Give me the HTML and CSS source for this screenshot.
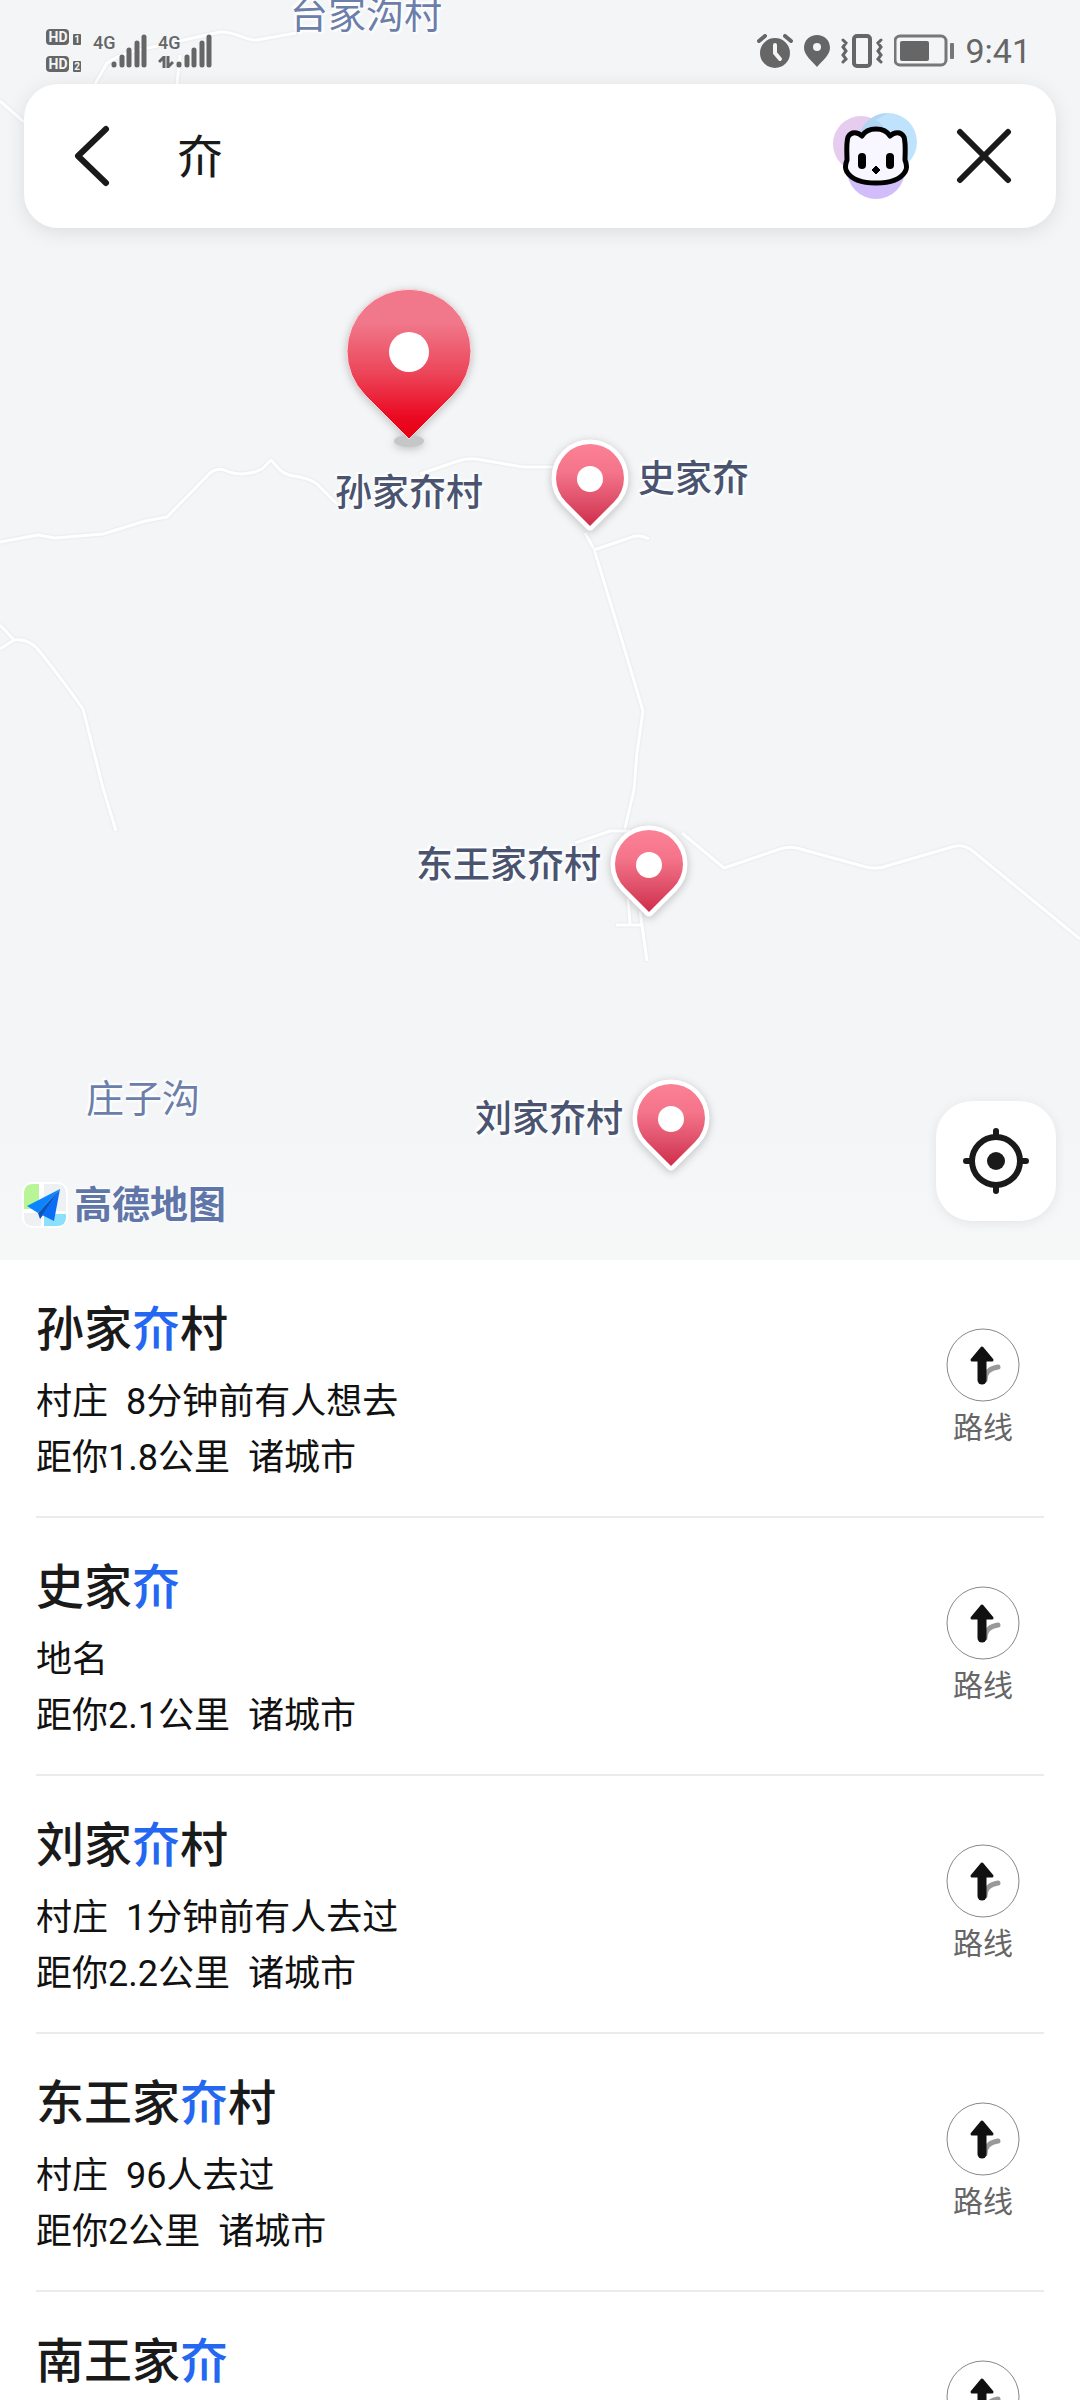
FILE: index.html
```html
<!DOCTYPE html>
<html lang="zh-CN">
<head>
    <meta charset="UTF-8">
    <meta name="viewport" content="width=device-width, initial-scale=1.0">
    <title>夼 - 高德地图</title>
    <link rel="stylesheet" href="styles.css">
</head>
<body>
    <!-- 共用图形 -->
    <svg class="defs" width="0" height="0" aria-hidden="true">
        <defs>
            <linearGradient id="pin-big-fill" x1="0" y1="0" x2="0" y2="1">
                <stop offset="0" stop-color="#f0788a"/>
                <stop offset="0.22" stop-color="#f0788a"/>
                <stop offset="0.55" stop-color="#ec475b"/>
                <stop offset="0.85" stop-color="#ea0a22"/>
                <stop offset="1" stop-color="#e60012"/>
            </linearGradient>
            <linearGradient id="pin-fill" x1="0" y1="0" x2="0" y2="1">
                <stop offset="0" stop-color="#fc8196"/>
                <stop offset="0.35" stop-color="#f4748a"/>
                <stop offset="0.75" stop-color="#dc4a64"/>
                <stop offset="1" stop-color="#cf2d4b"/>
            </linearGradient>
            <symbol id="pin" viewBox="0 0 80 100">
                <path d="M40 88 L16 64 A34 34 0 1 1 64 64 Z" fill="#fff" stroke="#fff" stroke-width="9" stroke-linejoin="round"/>
                <path d="M40 88 L16 64 A34 34 0 1 1 64 64 Z" fill="url(#pin-fill)"/>
                <circle cx="40" cy="41" r="13" fill="#fff"/>
            </symbol>
            <symbol id="signal" viewBox="0 0 36 34">
                <path d="M3 30v1M11 23v8M18 16v15M26 9v22M33 3v28" fill="none" stroke="#666" stroke-width="5" stroke-linecap="round"/>
            </symbol>
            <symbol id="route" viewBox="0 0 74 74">
                <circle cx="37" cy="37" r="36" fill="#fff" stroke="#888"/>
                <path d="M39 52c0-7 5-12 13-13" fill="none" stroke="#999" stroke-width="5" stroke-linecap="round"/>
                <path d="M36 20 L26 32 H46 Z" fill="#111" stroke="#111" stroke-width="3" stroke-linejoin="round"/>
                <path d="M36 30V52" fill="none" stroke="#111" stroke-width="9" stroke-linecap="round"/>
            </symbol>
        </defs>
    </svg>

    <section class="map">
        <div class="canvas">
            <svg class="roads" width="1080" height="1260" viewBox="0 0 1080 1260" aria-hidden="true">
                <path d="M0 101L24 122M95 84L107 63C120 54 134 51 148 48L193 38L220 32C236 31 246 41 257 40L296 33M180 55L177 84"/>
                <path d="M0 542L38 535L55 538L103 534L145 521L167 517L210 473Q219 466 229 472Q246 477 262 469L271 460L280 470Q286 475 294 476Q314 479 320 487L337 504"/>
                <path d="M420 474L458 461Q470 457 482 460L523 467H556"/>
                <path d="M585 533L594 549L623 644L643 711L637 753L634 790L625 828V840"/>
                <path d="M594 550L632 537Q640 534 649 539"/>
                <path d="M0 625L14 640Q30 638 41 653Q64 682 83 709L103 788L116 831M0 649L14 640"/>
                <path d="M575 843L610 831H630M682 833L724 868L780 849Q792 845 804 850L866 867Q878 870 890 865L952 847Q964 843 974 852L1080 939"/>
                <path d="M628 898L630 924M616 925H642M640 911L647 961"/>
            </svg>

            <span class="place place-taijiagou">台家沟村</span>
            <span class="place place-zhuangzigou">庄子沟</span>

            <div class="marker marker-sun">
                <svg class="pin-big" width="140" height="168" viewBox="0 0 140 168" aria-hidden="true">
                    <ellipse cx="70" cy="159" rx="15" ry="6" fill="#c4c6c8"/>
                    <path d="M70 157 L26 113 A62 62 0 1 1 114 113 Z" fill="url(#pin-big-fill)" stroke="#fbd9dc" stroke-width="1" stroke-linejoin="round"/>
                    <circle cx="70" cy="70" r="20" fill="#fff"/>
                </svg>
                <span class="marker-name">孙家夼村</span>
            </div>
            <div class="marker marker-shi">
                <svg class="pin" width="80" height="100" aria-hidden="true"><use href="#pin"/></svg>
                <span class="marker-name">史家夼</span>
            </div>
            <div class="marker marker-dongwang">
                <span class="marker-name">东王家夼村</span>
                <svg class="pin" width="80" height="100" aria-hidden="true"><use href="#pin"/></svg>
            </div>
            <div class="marker marker-liu">
                <span class="marker-name">刘家夼村</span>
                <svg class="pin" width="80" height="100" aria-hidden="true"><use href="#pin"/></svg>
            </div>
        </div>

        <header class="status-bar">
            <div class="status-left">
                <svg width="36" height="46" viewBox="0 0 36 46" aria-hidden="true">
                    <rect x="0" y="1" width="23" height="16" rx="4" fill="#666"/>
                    <rect x="0" y="28" width="23" height="16" rx="4" fill="#666"/>
                    <rect x="27" y="6" width="8" height="11" rx="1" fill="#666"/>
                    <rect x="27" y="33" width="8" height="11" rx="1" fill="#666"/>
                    <g class="hd-text">
                        <text x="12" y="14">HD</text>
                        <text x="12" y="41">HD</text>
                    </g>
                    <g class="sim-text">
                        <text x="31" y="15">1</text>
                        <text x="31" y="42">2</text>
                    </g>
                </svg>
                <div class="signal">
                    <div class="net"><span>4G</span></div>
                    <svg width="36" height="34" aria-hidden="true"><use href="#signal"/></svg>
                </div>
                <div class="signal">
                    <div class="net">
                        <span>4G</span>
                        <svg width="16" height="12" viewBox="0 0 16 12" aria-hidden="true">
                            <path d="M1 6L6 1V12M10 0V11L15 6" fill="none" stroke="#666" stroke-width="3"/>
                        </svg>
                    </div>
                    <svg width="36" height="34" aria-hidden="true"><use href="#signal"/></svg>
                </div>
            </div>
            <div class="status-right">
                <svg width="36" height="34" viewBox="0 0 36 34" aria-hidden="true">
                    <circle cx="18" cy="19" r="15" fill="#666"/>
                    <path d="M2 7L8 2M28 2L34 7" stroke="#666" stroke-width="4" stroke-linecap="round"/>
                    <path d="M18 11V19L23 25" fill="none" stroke="#f3f5f7" stroke-width="4" stroke-linecap="round"/>
                </svg>
                <svg width="26" height="34" viewBox="0 0 26 34" aria-hidden="true">
                    <path d="M13 1C6 1 0 6 0 14C0 21 8 27 13 33C18 27 26 21 26 14C26 6 20 1 13 1Z" fill="#666"/>
                    <circle cx="13" cy="13" r="4" fill="#f3f5f7"/>
                </svg>
                <svg width="42" height="34" viewBox="0 0 42 34" aria-hidden="true">
                    <rect x="13" y="2" width="16" height="30" rx="3" fill="none" stroke="#666" stroke-width="4"/>
                    <path d="M2 6L5 9L2 13L5 17L2 21L5 25L2 28M40 6L37 9L40 13L37 17L40 21L37 25L40 28" fill="none" stroke="#666" stroke-width="3" stroke-linecap="round"/>
                </svg>
                <svg width="60" height="34" viewBox="0 0 60 34" aria-hidden="true">
                    <rect x="1" y="2" width="51" height="29" rx="5" fill="none" stroke="#777" stroke-width="3"/>
                    <rect x="6" y="7" width="29" height="20" rx="2" fill="#666"/>
                    <rect x="56" y="9" width="4" height="16" rx="1" fill="#777"/>
                </svg>
                <span class="clock">9:41</span>
            </div>
        </header>

        <form class="search">
            <button class="icon-button" type="button" aria-label="返回">
                <svg width="40" height="64" viewBox="0 0 40 64">
                    <path d="M34 5L6 32L34 59" fill="none" stroke="#1a1a1a" stroke-width="6" stroke-linecap="round" stroke-linejoin="round"/>
                </svg>
            </button>
            <input class="search-input" type="text" value="夼" aria-label="搜索">
            <button class="icon-button assistant" type="button" aria-label="助手">
                <svg width="88" height="88" viewBox="0 0 88 88">
                    <circle cx="31" cy="32" r="28" fill="#e6cdf0"/>
                    <circle cx="46" cy="58" r="29" fill="#d0bdfa"/>
                    <circle cx="58" cy="30" r="29" fill="#bfe3fc"/>
                    <path d="M58 1A29 29 0 0 0 34 13A29 29 0 0 0 31 42L59 32A28 28 0 0 0 46 8Z" fill="#a9cdec" opacity="0.6"/>
                    <path d="M32 24C35 19 40 17 46 17C52 17 57 19 60 24C64 20 71 19 74 25C76 31 75 42 75 48C77 53 77 57 75 60C70 68 58 71 46 71C34 71 22 68 17 60C15 57 15 53 17 48C17 42 16 31 18 25C21 19 28 20 32 24Z" fill="#f8f7ff" stroke="#000" stroke-width="5" stroke-linejoin="round"/>
                    <rect x="28" y="41" width="8" height="16" rx="4"/>
                    <rect x="56" y="41" width="8" height="16" rx="4"/>
                    <path d="M46 54L50 58L46 62L42 58Z" stroke="#000" stroke-width="1" stroke-linejoin="round"/>
                </svg>
            </button>
            <button class="icon-button" type="reset" aria-label="关闭">
                <svg width="56" height="56" viewBox="0 0 56 56">
                    <path d="M4 4L52 52M52 4L4 52" fill="none" stroke="#1a1a1a" stroke-width="6" stroke-linecap="round"/>
                </svg>
            </button>
        </form>

        <div class="map-footer">
            <div class="brand">
                <svg width="46" height="46" viewBox="0 0 46 46" aria-hidden="true">
                    <rect width="46" height="46" rx="11" fill="#fff"/>
                    <path d="M11 2H17V27H2V11Q2 2 11 2Z" fill="#b8f596"/>
                    <path d="M22 2H35Q44 2 44 11V29H22Z" fill="#eef1f4"/>
                    <path d="M2 31H19V44H11Q2 44 2 35Z" fill="#eef1f4"/>
                    <path d="M22 32H44V35Q44 44 35 44H22Z" fill="#8be0fb"/>
                    <path d="M38 7L5 24L16 31Z" fill="#0a84ff"/>
                    <path d="M38 7L16 31L18 37L21 33Z" fill="#0a55b8"/>
                    <path d="M38 7L20 33L32 39Z" fill="#0b6df5"/>
                </svg>
                <span>高德地图</span>
            </div>
            <button class="locate" type="button" aria-label="定位">
                <svg width="66" height="66" viewBox="0 0 66 66">
                    <circle cx="33" cy="33" r="24" fill="none" stroke="#1a1a1a" stroke-width="6"/>
                    <circle cx="33" cy="33" r="9" fill="#1a1a1a"/>
                    <path d="M33 3V9M33 57V63M3 33H9M57 33H63" stroke="#1a1a1a" stroke-width="6" stroke-linecap="round"/>
                </svg>
            </button>
        </div>
    </section>

    <ul class="results">
        <li class="result">
            <div class="info">
                <h2>孙家<em>夼</em>村</h2>
                <p><span>村庄</span><span>8分钟前有人想去</span></p>
                <p><span>距你1.8公里</span><span>诸城市</span></p>
            </div>
            <button class="route" type="button">
                <svg width="74" height="74" aria-hidden="true"><use href="#route"/></svg>
                <span>路线</span>
            </button>
        </li>
        <li class="result">
            <div class="info">
                <h2>史家<em>夼</em></h2>
                <p><span>地名</span></p>
                <p><span>距你2.1公里</span><span>诸城市</span></p>
            </div>
            <button class="route" type="button">
                <svg width="74" height="74" aria-hidden="true"><use href="#route"/></svg>
                <span>路线</span>
            </button>
        </li>
        <li class="result">
            <div class="info">
                <h2>刘家<em>夼</em>村</h2>
                <p><span>村庄</span><span>1分钟前有人去过</span></p>
                <p><span>距你2.2公里</span><span>诸城市</span></p>
            </div>
            <button class="route" type="button">
                <svg width="74" height="74" aria-hidden="true"><use href="#route"/></svg>
                <span>路线</span>
            </button>
        </li>
        <li class="result">
            <div class="info">
                <h2>东王家<em>夼</em>村</h2>
                <p><span>村庄</span><span>96人去过</span></p>
                <p><span>距你2公里</span><span>诸城市</span></p>
            </div>
            <button class="route" type="button">
                <svg width="74" height="74" aria-hidden="true"><use href="#route"/></svg>
                <span>路线</span>
            </button>
        </li>
        <li class="result">
            <div class="info">
                <h2>南王家<em>夼</em></h2>
            </div>
            <button class="route" type="button" aria-label="路线">
                <svg width="74" height="74" aria-hidden="true"><use href="#route"/></svg>
            </button>
        </li>
    </ul>
</body>
</html>
```
FILE: styles.css
```css
* {
    box-sizing: border-box;
}
body {
    display: flex;
    flex-direction: column;
    height: 100vh;
    margin: 0;
    overflow: hidden;
    background-color: #fff;
    color: #1a1a1a;
    font-family: Roboto, "Noto Sans CJK SC", sans-serif;
}
svg {
    display: block;
    flex: none;
}
.defs {
    position: absolute;
}
button {
    padding: 0;
    border: none;
    background: none;
    font-family: inherit;
    color: inherit;
    cursor: pointer;
}

/* 地图 */
.map {
    position: relative;
    display: flex;
    flex: 0 0 auto;
    flex-direction: column;
    height: 52.5vh;
    overflow: hidden;
    background: linear-gradient(#f3f5f7 90%, #f6f8f8);
}
.canvas {
    position: absolute;
    inset: 0;
}
.roads path {
    fill: none;
    stroke: #fff;
    stroke-width: 3;
    stroke-linejoin: round;
    filter: drop-shadow(0 0 1px #dfe2e6);
}
.place,
.marker-name {
    white-space: nowrap;
    text-shadow: 0 0 3px #fff, 0 0 3px #fff, 2px 2px 2px #fff, -2px -2px 2px #fff;
}
.place {
    position: absolute;
    color: #6c7eaa;
    font-size: 38px;
    line-height: 48px;
}
.place-taijiagou {
    left: 290px;
    top: -9px;
}
.place-zhuangzigou {
    left: 86px;
    top: 1075px;
}
.marker {
    position: absolute;
    display: flex;
    align-items: flex-start;
    gap: 8px;
}
.marker-name {
    padding-top: 18px;
    color: #4a5470;
    font-size: 37px;
    font-weight: 500;
    line-height: 48px;
}
.pin,
.pin-big {
    filter: drop-shadow(0 2px 4px rgba(0, 0, 0, 0.22));
}
.marker-sun {
    left: 335px;
    top: 282px;
    flex-direction: column;
    align-items: center;
    gap: 2px;
}
.marker-shi {
    left: 550px;
    top: 438px;
}
.marker-dongwang {
    left: 416px;
    top: 824px;
}
.marker-liu {
    left: 475px;
    top: 1078px;
}

/* 状态栏 */
.status-bar {
    position: relative;
    display: flex;
    justify-content: space-between;
    align-items: center;
    padding: 17px 49px 0 46px;
    height: 84px;
    color: #666;
}
.status-left,
.status-right {
    display: flex;
    align-items: center;
    gap: 11px;
}
.hd-text,
.sim-text {
    fill: #f3f5f7;
    font-weight: 700;
    text-anchor: middle;
}
.hd-text {
    font-size: 14px;
}
.sim-text {
    font-size: 10px;
}
.signal {
    display: flex;
    align-items: flex-start;
}
.net {
    width: 18px;
    font-size: 18px;
    font-weight: 500;
    line-height: 18px;
}
.net svg {
    margin-top: 4px;
}
.clock {
    font-size: 34px;
    line-height: 40px;
}

/* 搜索框 */
.search {
    position: relative;
    display: flex;
    align-items: center;
    height: 144px;
    margin: 0 24px;
    padding: 0 44px 0 48px;
    border-radius: 34px;
    background-color: #fff;
    box-shadow: 0 4px 20px rgba(0, 0, 0, 0.1);
}
.search-input {
    flex: 1;
    min-width: 0;
    margin-left: 65px;
    padding: 0 0 6px;
    border: none;
    outline: none;
    background: none;
    color: #1a1a1a;
    font-family: inherit;
    font-size: 46px;
}
.assistant {
    margin-right: 38px;
}

.map-footer {
    position: relative;
    display: flex;
    justify-content: space-between;
    align-items: flex-end;
    margin-top: auto;
    padding: 0 24px 32px 22px;
}
.brand {
    display: flex;
    align-items: center;
    gap: 6px;
    color: #6076a8;
    font-size: 38px;
    font-weight: 700;
    line-height: 46px;
    text-shadow: 0 0 3px #fff, 0 0 3px #fff;
}
.locate {
    display: flex;
    justify-content: center;
    align-items: center;
    width: 120px;
    height: 120px;
    margin-bottom: 7px;
    border-radius: 36px;
    background-color: #fff;
    box-shadow: 0 2px 12px rgba(0, 0, 0, 0.08);
}

/* 结果列表 */
.results {
    flex: 1;
    min-height: 0;
    margin: 0;
    padding: 0 36px;
    overflow-y: auto;
    scrollbar-width: none;
    list-style: none;
}
.result {
    display: flex;
    justify-content: space-between;
    align-items: flex-start;
    padding: 42px 24px 30px 0;
    border-bottom: 2px solid #ebebeb;
}
.info h2 {
    margin: 0 0 16px;
    font-size: 48px;
    font-weight: 500;
    line-height: 56px;
}
.info em {
    color: #2468f2;
    font-style: normal;
}
.info p {
    display: flex;
    gap: 18px;
    margin: 0;
    color: #111;
    font-size: 36px;
    line-height: 56px;
}
.route {
    display: flex;
    flex-direction: column;
    align-items: center;
    gap: 6px;
    margin-top: 26px;
    color: #666;
    font-size: 30px;
    line-height: 40px;
}
```
